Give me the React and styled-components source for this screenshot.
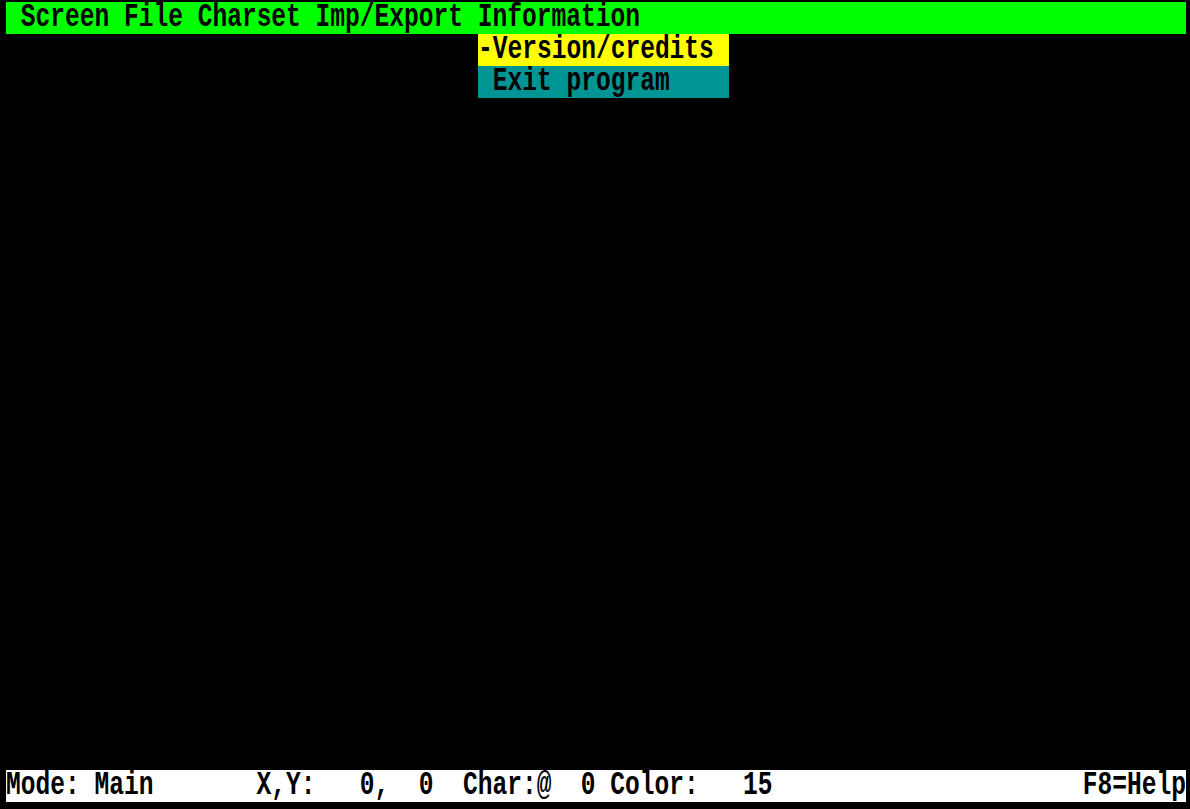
import React from 'react';
import styled, { createGlobalStyle } from 'styled-components';

const CELL_W = 14.75;
const CELL_H = 32;

const GlobalStyle = createGlobalStyle`
  html, body {
    margin: 0;
    padding: 0;
    background: #000;
  }
`;

const Screen = styled.div`
  width: 1190px;
  height: 809px;
  box-sizing: border-box;
  padding: 2px 4px 7px 6px;
  display: flex;
  flex-direction: column;
  background: #000;
  font-family: "Liberation Mono", "DejaVu Sans Mono", monospace;
  font-size: ${CELL_W / 0.6001}px;
  font-weight: bold;
  color: #000;
  overflow: hidden;
`;

const Row = styled.div`
  height: ${CELL_H}px;
  line-height: ${CELL_H}px;
  white-space: pre;
  background: ${(p) => p.bg};
  display: flex;
`;

const Glyphs = styled.span`
  display: inline-block;
  height: ${CELL_H}px;
  transform: translateY(1px) scaleY(1.32);
  transform-origin: 50% 55%;
`;

const MenuBar = styled(Row)`
  padding-left: ${CELL_W}px;
  gap: ${CELL_W}px;
`;

const Workspace = styled.div`
  flex: 1;
  position: relative;
`;

const Dropdown = styled.div`
  position: absolute;
  top: 0;
  left: ${32 * CELL_W}px;
  width: ${17 * CELL_W}px;
  display: flex;
  flex-direction: column;
`;

const StatusBar = styled(Row)`
  justify-content: space-between;
`;

const menus = ['Screen', 'File', 'Charset', 'Imp/Export', 'Information'];

const options = [
  { label: '-Version/credits', bg: '#ffff00' },
  { label: ' Exit program', bg: '#009494' },
];

export default function App () {
  return (
    <>
      <GlobalStyle />
      <Screen>
        <MenuBar bg="#00ff00">
          {menus.map((m) => <Glyphs key={m}>{m}</Glyphs>)}
        </MenuBar>
        <Workspace>
          <Dropdown>
            {options.map((o) => (
              <Row key={o.label} bg={o.bg}>
                <Glyphs>{o.label}</Glyphs>
              </Row>
            ))}
          </Dropdown>
        </Workspace>
        <StatusBar bg="#ffffff">
          <Glyphs>{'Mode: Main       X,Y:   0,  0  Char:@  0 Color:   15'}</Glyphs>
          <Glyphs>F8=Help</Glyphs>
        </StatusBar>
      </Screen>
    </>
  );
}
